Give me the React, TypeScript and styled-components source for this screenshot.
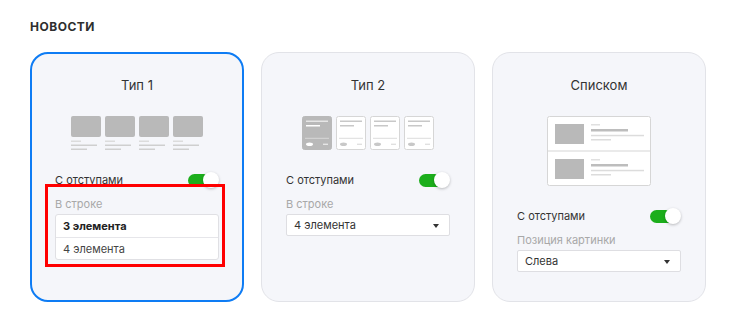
import React from "react";
import styled, { createGlobalStyle } from "styled-components";

const GlobalStyle = createGlobalStyle`
  body {
    margin: 0;
    background: #ffffff;
    font-family: Inter, "Noto Sans", "Liberation Sans", sans-serif;
    color: #333333;
  }
  * { box-sizing: border-box; }
`

const Page = styled.div`
  padding: 20px 0 0 30px;
`
const Heading = styled.h2`
  margin: 0 0 18px 0;
  font-size: 12px;
  line-height: 14px;
  font-weight: 700;
  letter-spacing: 0.5px;
  text-transform: uppercase;
  color: #2e2e2e;
`
const Cards = styled.div`
  display: flex;
  gap: 17px;
`
const Card = styled.div<{ $active?: boolean }>`
  flex: 0 0 214px;
  height: 250px;
  display: flex;
  flex-direction: column;
  padding: ${p => (p.$active ? "23px 23px" : "24px 24px")};
  background: #f5f6fa;
  border: ${p => (p.$active ? "2px solid #0e7cf4" : "1px solid #e2e3e8")};
  border-radius: 18px;
`
const Title = styled.div`
  text-align: center;
  font-size: 13px;
  line-height: 16px;
  color: #333;
  margin-bottom: 23px;
`
const Preview = styled.div`
  display: flex;
  justify-content: center;
  margin-bottom: 22px;
`
const ToggleRow = styled.div`
  display: flex;
  align-items: center;
  justify-content: space-between;
  height: 16px;
  font-size: 11px;
  color: #333;
`
const Toggle = styled.span`
  position: relative;
  width: 31px;
  height: 16px;
  &::before {
    content: "";
    position: absolute;
    left: 0;
    top: 1.5px;
    width: 27px;
    height: 13px;
    border-radius: 7px;
    background: #1cae1c;
  }
  &::after {
    content: "";
    position: absolute;
    right: 0;
    top: 0;
    width: 16px;
    height: 16px;
    border-radius: 50%;
    background: #fff;
    box-shadow: 0 1px 3px rgba(0, 0, 0, 0.25);
  }
`
const Label = styled.div`
  margin-top: 10px;
  font-size: 11px;
  line-height: 13px;
  color: #a8a8a8;
  margin-bottom: 3px;
`
const Highlight = styled.div`
  position: relative;
  &::after {
    content: "";
    position: absolute;
    left: -10px;
    right: -6px;
    top: -4px;
    bottom: -7px;
    border: 3px solid #ff0000;
    pointer-events: none;
  }
`
const List = styled.div`
  background: #fff;
  border: 1px solid #e0e0e4;
  border-radius: 3px;
`
const Option = styled.div<{ $selected?: boolean }>`
  height: 22px;
  display: flex;
  align-items: center;
  padding: 0 7px;
  font-size: 11px;
  font-weight: ${p => (p.$selected ? 700 : 400)};
  color: ${p => (p.$selected ? "#222" : "#444")};
  & + & {
    border-top: 1px solid #e6e6ea;
  }
`
const Select = styled.div`
  position: relative;
  height: 22px;
  display: flex;
  align-items: center;
  padding: 0 7px;
  background: #fff;
  border: 1px solid #dedee2;
  border-radius: 2px;
  font-size: 11px;
  color: #333;
  &::after {
    content: "";
    position: absolute;
    right: 10px;
    top: 9px;
    border-left: 3px solid transparent;
    border-right: 3px solid transparent;
    border-top: 4px solid #333;
  }
`

const GridPreview: React.FC = () => (
  <svg width="132" height="34" viewBox="0 0 132 34">
    {[0, 34, 68, 102].map(x => (
      <g key={x}>
        <rect x={x} y={0} width={30} height={21} rx={2} fill="#b9b9b9" />
        <rect x={x} y={24.5} width={10} height={1.5} fill="#dcdcdc" />
        <rect x={x} y={28.5} width={26} height={1.5} fill="#cfcfcf" />
        <rect x={x} y={32.5} width={16} height={1.5} fill="#cfcfcf" />
      </g>
    ))}
  </svg>
);

const TilePreview: React.FC = () => (
  <svg width="132" height="34" viewBox="0 0 132 34">
    {[0, 34, 68, 102].map((x, i) => {
      const filled = i === 0;
      const line = filled ? "#e6e6e6" : "#c8c8c8";
      return (
        <g key={x}>
          <rect
            x={x + 0.5}
            y={0.5}
            width={29}
            height={33}
            rx={2}
            fill={filled ? "#b9b9b9" : "#fff"}
            stroke={filled ? "#b9b9b9" : "#d6d6d6"}
          />
          <rect x={x + 4} y={4.5} width={22} height={1.5} fill={line} />
          <rect x={x + 4} y={9} width={14} height={1.5} fill={filled ? "#fff" : line} />
          <rect x={x + 3} y={21.8} width={24} height={1} fill={filled ? "#d8d8d8" : "#dcdcdc"} />
          <ellipse cx={x + 7.5} cy={28.3} rx={3.5} ry={1.8} fill={filled ? "#fff" : "#c8c8c8"} />
          <rect x={x + 21} y={27.6} width={5} height={1.4} fill={filled ? "#e6e6e6" : "#e0e0e0"} />
        </g>
      );
    })}
  </svg>
);

const ListPreview: React.FC = () => (
  <svg width="104" height="70" viewBox="0 0 104 70">
    <rect x={0.5} y={0.5} width={103} height={69} rx={2} fill="#fff" stroke="#d6d6d6" />
    <rect x={0.5} y={34.5} width={103} height={1} fill="#d6d6d6" />
    {[0, 35].map(y => (
      <g key={y}>
        <rect x={8} y={y + 8} width={29} height={20} fill="#b9b9b9" />
        <rect x={44} y={y + 8} width={9} height={1.5} fill="#e0e0e0" />
        <rect x={44} y={y + 13} width={37} height={2.5} fill="#bdbdbd" />
        <rect x={44} y={y + 18.8} width={53} height={1.5} fill="#dcdcdc" />
        <rect x={44} y={y + 23} width={20} height={1.5} fill="#dcdcdc" />
      </g>
    ))}
  </svg>
);

const App: React.FC = () => {
  return (<>
    <GlobalStyle />
    <Page>
      <Heading>Новости</Heading>
      <Cards>
        <Card $active>
          <Title>Тип 1</Title>
          <Preview><GridPreview /></Preview>
          <ToggleRow>С отступами<Toggle /></ToggleRow>
          <Highlight>
            <Label>В строке</Label>
            <List>
              <Option $selected>3 элемента</Option>
              <Option>4 элемента</Option>
            </List>
          </Highlight>
        </Card>
        <Card>
          <Title>Тип 2</Title>
          <Preview><TilePreview /></Preview>
          <ToggleRow>С отступами<Toggle /></ToggleRow>
          <Label>В строке</Label>
          <Select>4 элемента</Select>
        </Card>
        <Card>
          <Title>Списком</Title>
          <Preview><ListPreview /></Preview>
          <ToggleRow>С отступами<Toggle /></ToggleRow>
          <Label>Позиция картинки</Label>
          <Select>Слева</Select>
        </Card>
      </Cards>
    </Page>
  </>)
}
export default App;
